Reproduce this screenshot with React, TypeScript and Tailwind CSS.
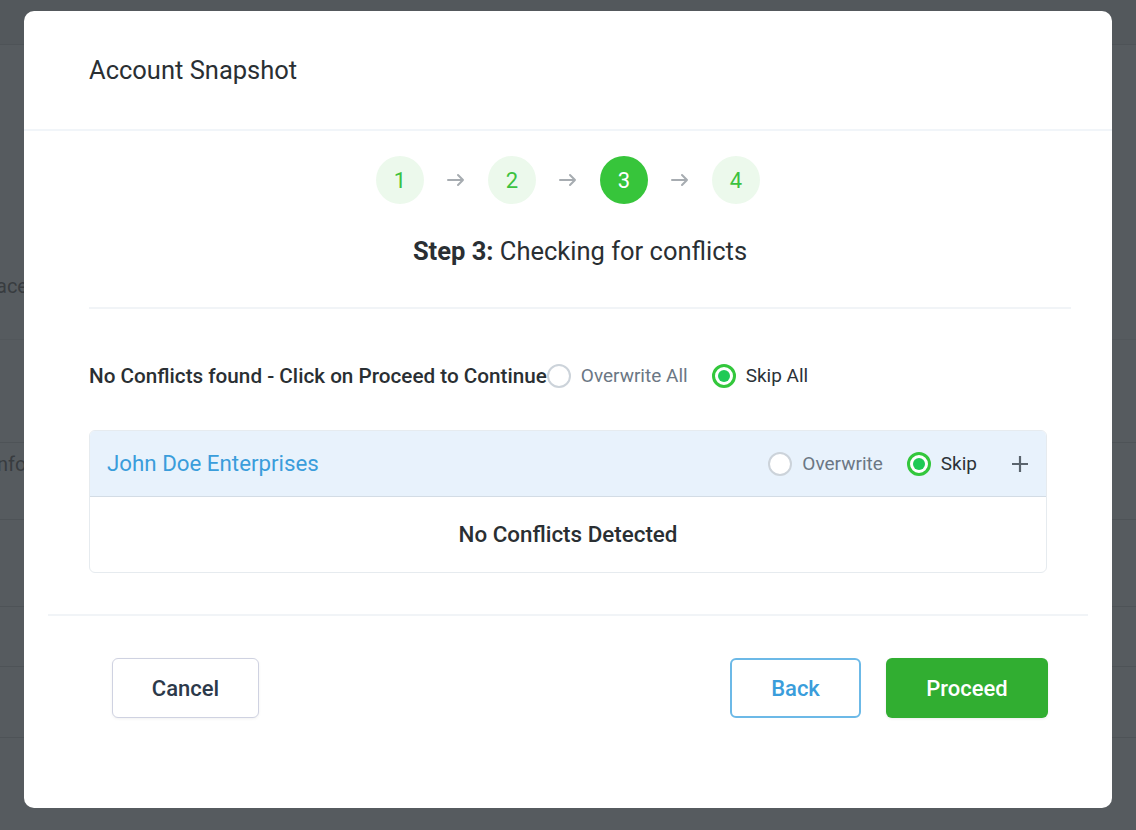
import React from 'react';

const STEPS = [1, 2, 3, 4];
const ACTIVE_STEP = 3;

function Radio({ checked, label, muted }: { checked: boolean; label: string; muted?: boolean }) {
  return (
    <label className="flex items-center gap-[10px] cursor-pointer">
      {checked ? (
        <span className="flex h-6 w-6 items-center justify-center rounded-full border-[3px] border-[#33c73c] bg-white">
          <span className="h-[12px] w-[12px] rounded-full bg-[#1fca55]" />
        </span>
      ) : (
        <span className="h-6 w-6 rounded-full border-2 border-[#ccd3da] bg-white" />
      )}
      <span className={`text-[19px] leading-7 ${muted ? 'text-[#6b7784]' : 'text-[#2b3238]'}`}>{label}</span>
    </label>
  );
}

function Arrow() {
  return (
    <div className="flex w-16 items-center justify-center">
      <svg width="20" height="14" viewBox="0 0 20 14" fill="none" stroke="#a7acb1" strokeWidth="2" strokeLinecap="round" strokeLinejoin="round">
        <path d="M2 7h15M12 2l5 5-5 5" />
      </svg>
    </div>
  );
}

export default function App() {
  return (
    <div className="relative h-[830px] w-[1136px] overflow-hidden bg-[#565b5f]" style={{ fontFamily: 'Roboto, "Liberation Sans", sans-serif' }}>
      {/* page behind the overlay */}
      <div className="h-[45px] border-b border-[#4e5357] bg-[#53585c]" />
      <div className="h-[295px] border-b border-[#52575b] pt-[227px]">
        <p className="-ml-[4px] text-[20px] leading-7 text-[#383c3f]">ace</p>
      </div>
      <div className="h-[103px] border-b border-[#4e5357]" />
      <div className="h-[77px] border-b border-[#4e5357] pt-[7px]">
        <p className="-ml-[3px] text-[20px] leading-7 text-[#383c3f]">nfo</p>
      </div>
      <div className="h-[87px] border-b border-[#4e5357]" />
      <div className="h-[60px] border-b border-[#4e5357]" />
      <div className="h-[71px] border-b border-[#4e5357]" />

      {/* modal */}
      <div className="absolute inset-0 flex items-start justify-center pt-[11px]">
        <div className="flex h-[797px] w-[1088px] flex-col rounded-[10px] bg-white">
          <div className="flex h-[120px] items-center border-b-2 border-[#f1f5f9] px-[65px]">
            <h2 className="text-[25.5px] leading-8 text-[#2a2f33]">Account Snapshot</h2>
          </div>

          <div className="flex justify-center pt-[25px]">
            {STEPS.map((s, i) => (
              <React.Fragment key={s}>
                {i > 0 && <Arrow />}
                <div
                  className={`flex h-12 w-12 items-center justify-center rounded-full text-[22px] ${
                    s === ACTIVE_STEP ? 'bg-[#37c53b] text-white' : 'bg-[#ecf9ec] text-[#3cc23f]'
                  }`}
                >
                  {s}
                </div>
              </React.Fragment>
            ))}
          </div>

          <p className="mt-[31px] pl-6 text-center text-[25.5px] leading-8 text-[#2a2f33]">
            <span className="font-bold">Step 3:</span> Checking for conflicts
          </p>

          <div className="ml-[65px] mr-[41px] mt-[40px] h-[2px] bg-[#f1f4f7]" />

          <div className="mt-[53px] flex items-center px-[65px]">
            <span className="text-[20.7px] font-medium leading-7 text-[#2a2f33]">No Conflicts found - Click on Proceed to Continue</span>
            <div className="flex items-center gap-[24px]">
              <Radio checked={false} label="Overwrite All" muted />
              <Radio checked label="Skip All" />
            </div>
          </div>

          <div className="mx-[65px] mt-[40px] overflow-hidden rounded-[6px] border border-[#e6ebef]">
            <div className="flex h-[66px] items-center justify-between border-b border-[#d3dce5] bg-[#e8f2fc] pl-[17px] pr-[17px]">
              <span className="text-[22.3px] text-[#3a9ddb]">John Doe Enterprises</span>
              <div className="flex items-center">
                <Radio checked={false} label="Overwrite" muted />
                <div className="ml-[24px]">
                  <Radio checked label="Skip" />
                </div>
                <svg className="ml-[34px]" width="18" height="18" viewBox="0 0 18 18" stroke="#5a646d" strokeWidth="2.2">
                  <path d="M9 1v16M1 9h16" />
                </svg>
              </div>
            </div>
            <div className="flex h-[75px] items-center justify-center">
              <span className="text-[22.4px] font-medium text-[#2a2f33]">No Conflicts Detected</span>
            </div>
          </div>

          <div className="mx-6 mt-[41px] h-[2px] bg-[#f1f4f7]" />

          <div className="mt-[42px] flex items-center pl-[88px] pr-[64px]">
            <button type="button" className="h-[60px] w-[147px] rounded-[6px] border border-[#cfd2e1] bg-white text-[22px] font-medium text-[#2c394a] shadow-[0_1px_3px_rgba(0,0,0,0.06)]">
              Cancel
            </button>
            <div className="ml-auto flex items-center gap-[25px]">
              <button type="button" className="h-[60px] w-[131px] rounded-[6px] border-2 border-[#6cb9e7] bg-white text-[22px] font-medium text-[#3a9ddb]">
                Back
              </button>
              <button type="button" className="h-[60px] w-[162px] rounded-[6px] bg-[#31ae31] text-[22px] font-medium text-white shadow-[0_1px_3px_rgba(0,0,0,0.08)]">
                Proceed
              </button>
            </div>
          </div>
        </div>
      </div>
    </div>
  );
}
